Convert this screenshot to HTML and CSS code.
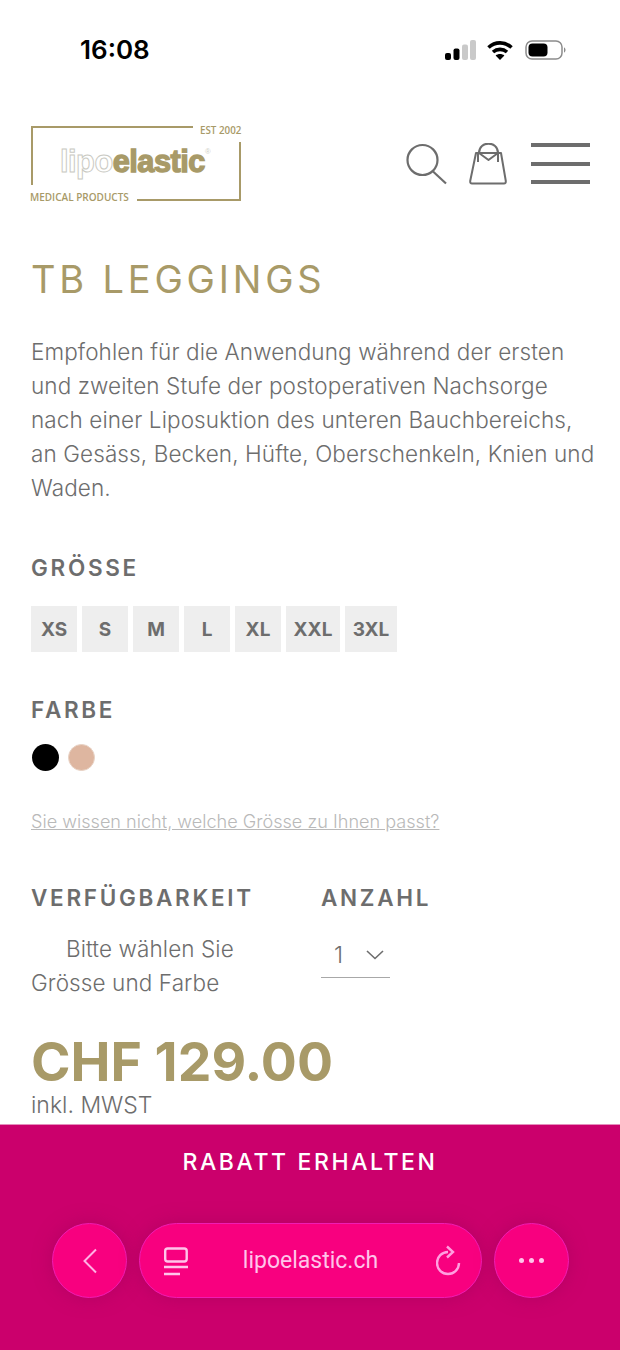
FILE: index.html
```html
<!DOCTYPE html>
<html lang="de">
<head>
  <meta charset="utf-8">
  <title>TB Leggings</title>
  <link rel="stylesheet" href="styles.css">
</head>
<body>

  <!-- Statusleiste -->
  <div class="statusbar">
    <span class="time">16:08</span>
    <div class="status-icons">
      <svg class="icon-signal" width="31" height="20" viewBox="0 0 31 20">
        <rect x="0" y="13" width="6" height="7" rx="2" fill="#000"/>
        <rect x="8.500" y="8.500" width="6" height="11.500" rx="2" fill="#000"/>
        <rect x="17" y="4.500" width="6" height="15.500" rx="2" fill="#c9c9c9"/>
        <rect x="25" y="0" width="6" height="20" rx="2" fill="#c9c9c9"/>
      </svg>
      <svg class="icon-wifi" width="26" height="20" viewBox="0 0 26 20" fill="none" stroke="#000" stroke-width="3.600">
        <path d="M1.500 7.500C8 1.300 18 1.300 24.500 7.500"/>
        <path d="M6 12C10 8.500 16 8.500 20 12"/>
        <path d="M13 20L8.600 15.400C11 13.400 15 13.400 17.400 15.400Z" fill="#000" stroke="none"/>
      </svg>
      <svg width="42" height="20" viewBox="0 0 42 20">
        <rect x="1" y="1" width="36" height="18" rx="6" fill="none" stroke="#8c8c8c" stroke-width="1.500"/>
        <rect x="3.500" y="3.500" width="19" height="13" rx="4" fill="#000"/>
        <path d="M39 7.500C41 8 41 12 39 12.500Z" fill="#8c8c8c"/>
      </svg>
    </div>
  </div>

  <!-- Kopfzeile -->
  <header class="header">
    <div class="logo">
      <span class="logo-est">EST 2002</span>
      <span class="logo-word"><span class="logo-lipo">lipo</span>elastic<sup class="logo-reg">®</sup></span>
      <span class="logo-medical">MEDICAL PRODUCTS</span>
    </div>
    <div class="header-icons">
      <svg width="41" height="42" viewBox="0 0 41 42" fill="none" stroke="#6d6d6d" stroke-width="2.200">
        <circle cx="16.500" cy="17" r="15"/>
        <path d="M26.500 28L40 40.500"/>
      </svg>
      <svg width="38" height="42" viewBox="0 0 38 42" fill="none" stroke="#6d6d6d" stroke-width="2" stroke-linejoin="round">
        <path d="M7 10H32L36.800 38Q37 40.500 35 40.500H3Q1 40.500 1.200 38Z"/>
        <path d="M10 10L19.500 17L29 10"/>
        <path d="M9 10V19M29 10V19"/>
        <path d="M10 10C10 -2.500 29 -2.500 29 10"/>
      </svg>
      <div class="burger"><i></i><i></i><i></i></div>
    </div>
  </header>

  <main class="product">
    <h1 class="title">TB LEGGINGS</h1>
    <p class="intro">Empfohlen für die Anwendung während der ersten<br>und zweiten Stufe der postoperativen Nachsorge<br>nach einer Liposuktion des unteren Bauchbereichs,<br>an Gesäss, Becken, Hüfte, Oberschenkeln, Knien und<br>Waden.</p>

    <h2 class="label label-size">GRÖSSE</h2>
    <div class="sizes">
      <span class="size">XS</span>
      <span class="size">S</span>
      <span class="size">M</span>
      <span class="size">L</span>
      <span class="size">XL</span>
      <span class="size size-xxl">XXL</span>
      <span class="size size-3xl">3XL</span>
    </div>

    <h2 class="label label-color">FARBE</h2>
    <div class="colors">
      <span class="color color-black"></span>
      <span class="color color-skin"></span>
    </div>

    <a class="size-link" href="#">Sie wissen nicht, welche Grösse zu Ihnen passt?</a>

    <div class="order">
      <div class="order-stock">
        <h2 class="label">VERFÜGBARKEIT</h2>
        <p class="stock-text"><span class="stock-first">Bitte wählen Sie</span><br>Grösse und Farbe</p>
      </div>
      <div class="order-qty">
        <h2 class="label">ANZAHL</h2>
        <div class="qty">
          <span>1</span>
          <svg width="18" height="10" viewBox="0 0 18 10" fill="none" stroke="#6d6d6d" stroke-width="1.600"><path d="M1 1L9 8.500L17 1"/></svg>
        </div>
      </div>
    </div>

    <div class="price">CHF 129.00</div>
    <div class="tax">inkl. MWST</div>
  </main>

  <!-- Rabatt und Browserleiste -->
  <footer class="bottom">
    <div class="rabatt">RABATT ERHALTEN</div>
    <div class="browser">
      <div class="round">
        <svg width="14" height="26" viewBox="0 0 14 26" fill="none" stroke="#ffb0e4" stroke-width="2"><path d="M13 1.500L1.500 13L13 24.500"/></svg>
      </div>
      <div class="urlbar">
        <svg width="26" height="30" viewBox="0 0 26 30" fill="none" stroke="#ffc4ea" stroke-width="2.400">
          <rect x="1.200" y="2.500" width="21.500" height="13" rx="2.500"/>
          <path d="M0 21H24M0 28H16"/>
        </svg>
        <span class="url">lipoelastic.ch</span>
        <svg width="26" height="32" viewBox="0 0 26 32" fill="none" stroke="#ff9fe0" stroke-width="2.400">
          <path d="M12 7A11 11 0 1 0 23 18"/>
          <path d="M11 1.500L17 7L11 12.500"/>
        </svg>
      </div>
      <div class="round">
        <span class="dots"><i></i><i></i><i></i></span>
      </div>
    </div>
  </footer>

</body>
</html>
```

FILE: styles.css
```css
* {
  box-sizing: border-box;
}

body {
  margin: 0;
  width: 620px;
  height: 1350px;
  overflow: hidden;
  background-color: #fff;
  color: #6d6d6d;
  font-family: Inter, Arial, sans-serif;
  font-weight: 300;
  display: flex;
  flex-direction: column;
}

.statusbar {
  height: 100px;
  padding: 32px 53px 0 80px;
  display: flex;
  justify-content: space-between;
  align-items: flex-start;
}

.time {
  font-size: 26px;
  font-weight: 600;
  line-height: 36px;
  color: #000;
}

.status-icons {
  display: flex;
  align-items: center;
  padding-top: 8px;
}

.icon-wifi {
  margin: 0 12px 0 11px;
}

.header {
  height: 156px;
  padding: 26px 30px 0 31px;
  display: flex;
  justify-content: space-between;
  align-items: flex-start;
}

.logo {
  position: relative;
  width: 210px;
  height: 75px;
  border: 2px solid #a89a68;
}

.logo-est {
  position: absolute;
  top: -4px;
  right: -4px;
  width: 50px;
  height: 18px;
  padding-left: 7px;
  background-color: #fff;
  font-family: "Open Sans", sans-serif;
  font-size: 9.800px;
  font-weight: 600;
  line-height: 14px;
  white-space: nowrap;
  color: #a89a68;
}

.logo-word {
  position: absolute;
  top: 13px;
  left: 27px;
  font-family: "Liberation Sans", sans-serif;
  font-size: 32px;
  font-weight: 700;
  line-height: 40px;
  letter-spacing: -0.500px;
  white-space: nowrap;
  color: #a89a68;
  -webkit-text-stroke: 1.400px #a89a68;
  transform: scaleX(0.96);
  transform-origin: left top;
}

.logo-lipo {
  color: #fff;
  -webkit-text-stroke: 1px #c9c9c2;
}

.logo-reg {
  font-size: 8px;
  font-weight: 400;
  color: #cfcfc8;
  -webkit-text-stroke: 0;
  vertical-align: 18px;
  line-height: 0;
}

.logo-medical {
  position: absolute;
  left: -3px;
  bottom: -3px;
  width: 107px;
  height: 17px;
  padding-top: 5px;
  background-color: #fff;
  font-family: "Open Sans", sans-serif;
  font-size: 10px;
  font-weight: 600;
  line-height: 14px;
  white-space: nowrap;
  color: #a89a68;
}

.header-icons {
  display: flex;
  align-items: flex-start;
  padding-top: 17px;
}

.header-icons svg:nth-child(2) {
  margin-left: 22px;
}

.burger {
  margin-left: 24px;
  width: 59px;
  height: 41px;
  display: flex;
  flex-direction: column;
  justify-content: space-between;
}

.burger i {
  display: block;
  height: 4px;
  background-color: #6d6d6d;
}

.product {
  flex: 1;
  padding: 0 30px 0 31px;
}

.title {
  margin: 0;
  font-size: 38px;
  font-weight: 400;
  line-height: 46px;
  letter-spacing: 3.800px;
  color: #a89a68;
}

.intro {
  margin: 33px 0 0;
  font-size: 22.500px;
  line-height: 34px;
  letter-spacing: 0.100px;
  white-space: nowrap;
}

.label {
  margin: 0;
  font-size: 22.500px;
  font-weight: 600;
  line-height: 30px;
  letter-spacing: 2.700px;
}

.label-size {
  margin-top: 48px;
}

.sizes {
  margin-top: 23px;
  display: flex;
  gap: 5px;
}

.size {
  width: 46px;
  height: 46px;
  background-color: #eeeeee;
  font-size: 19px;
  font-weight: 700;
  line-height: 47px;
  text-align: center;
}

.size-xxl {
  width: 54px;
}

.size-3xl {
  width: 52px;
}

.label-color {
  margin-top: 43px;
}

.colors {
  margin-top: 19px;
  margin-left: 1px;
  display: flex;
  gap: 9px;
}

.color {
  width: 27px;
  height: 27px;
  border-radius: 50%;
}

.color-black {
  background-color: #000;
}

.color-skin {
  background-color: #deb6a0;
  border: 1px solid #e8d2c4;
}

.size-link {
  display: block;
  margin-top: 37px;
  font-size: 18.100px;
  line-height: 26px;
  color: #b9b9b9;
}

.order {
  margin-top: 49px;
  display: flex;
  gap: 67px;
}

.order-stock {
  width: 223px;
}

.stock-text {
  margin: 19px 0 0;
  font-size: 22.500px;
  line-height: 34px;
  letter-spacing: 0.100px;
}

.stock-first {
  margin-left: 35px;
}

.qty {
  margin-top: 19px;
  width: 69px;
  height: 46px;
  padding: 0 6px 0 13px;
  border-bottom: 1px solid #a8a8a8;
  display: flex;
  justify-content: space-between;
  align-items: center;
  font-size: 23px;
}

.price {
  margin-top: 34px;
  font-size: 53.500px;
  font-weight: 700;
  line-height: 56px;
  color: #a89a68;
}

.tax {
  font-size: 23px;
  line-height: 30px;
}

.bottom {
  height: 226px;
  background-color: #cb006c;
  border-top: 1px solid #e58ebc;
  padding-top: 21px;
}

.rabatt {
  font-size: 23px;
  font-weight: 500;
  line-height: 32px;
  letter-spacing: 2.600px;
  color: #fff;
  text-align: center;
}

.browser {
  margin-top: 45px;
  padding-left: 52px;
  display: flex;
  gap: 12px;
}

.round {
  width: 75px;
  height: 75px;
  border-radius: 50%;
  background-color: #f8007f;
  border: 1px solid #f01cb4;
  box-shadow: 0 0 18px rgba(160, 0, 90, 0.5);
  display: flex;
  justify-content: center;
  align-items: center;
}

.urlbar {
  width: 343px;
  height: 75px;
  border-radius: 38px;
  background-color: #f8007f;
  border: 1px solid #f01cb4;
  box-shadow: 0 0 18px rgba(160, 0, 90, 0.5);
  padding: 0 19px 0 24px;
  display: flex;
  justify-content: space-between;
  align-items: center;
}

.url {
  margin-right: 5px;
  font-family: Roboto, sans-serif;
  font-size: 23px;
  font-weight: 400;
  color: #ffc4ea;
}

.dots {
  display: flex;
  gap: 5px;
}

.dots i {
  display: block;
  width: 5px;
  height: 5px;
  border-radius: 50%;
  background-color: #ffc4ea;
}
```
